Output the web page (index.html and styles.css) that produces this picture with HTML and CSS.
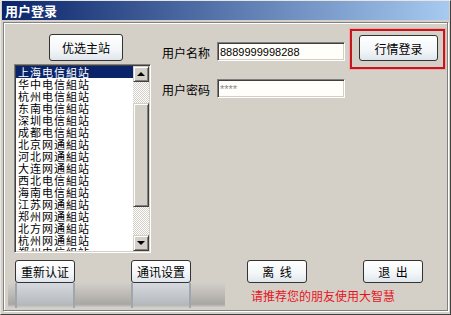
FILE: index.html
```html
<!DOCTYPE html>
<html lang="zh-CN">
<head>
    <meta charset="UTF-8">
    <title>用户登录</title>
    <link rel="stylesheet" href="styles.css">
</head>
<body>
    <div class="window">
        <div class="titlebar">用户登录</div>
        <div class="panel">
            <div class="top">
                <div class="stations">
                    <button class="btn btn-pref" type="button">优选主站</button>
                    <div class="listbox">
                        <div class="items">
                            <div class="item selected">上海电信組站</div>
                            <div class="item">华中电信組站</div>
                            <div class="item">杭州电信組站</div>
                            <div class="item">东南电信組站</div>
                            <div class="item">深圳电信組站</div>
                            <div class="item">成都电信組站</div>
                            <div class="item">北京网通組站</div>
                            <div class="item">河北网通組站</div>
                            <div class="item">大连网通組站</div>
                            <div class="item">西北电信組站</div>
                            <div class="item">海南电信組站</div>
                            <div class="item">江苏网通組站</div>
                            <div class="item">郑州网通組站</div>
                            <div class="item">北方网通組站</div>
                            <div class="item">杭州网通組站</div>
                            <div class="item">郑州电信組站</div>
                        </div>
                        <div class="scrollbar">
                            <div class="sb-btn"><span class="arrow-up"></span></div>
                            <div class="sb-track"><div class="sb-thumb"></div></div>
                            <div class="sb-btn"><span class="arrow-down"></span></div>
                        </div>
                    </div>
                </div>

                <div class="account">
                    <div class="field">
                        <label for="userName">用户名称</label>
                        <input type="text" id="userName" class="text-input" value="8889999998288">
                    </div>
                    <div class="field">
                        <label for="userPass">用户密码</label>
                        <input type="text" id="userPass" class="text-input pass" value="****">
                    </div>
                </div>

                <div class="login-frame">
                    <button class="btn btn-login" type="button">行情登录</button>
                </div>
            </div>

            <div class="actions">
                <button class="btn btn-small" type="button">重新认证</button>
                <button class="btn btn-small" type="button">通讯设置</button>
                <button class="btn btn-small" type="button">离&nbsp;&nbsp;线</button>
                <button class="btn btn-small" type="button">退&nbsp;&nbsp;出</button>
            </div>

            <div class="footer">
                <div class="strip">
                    <div class="ghost"></div>
                    <div class="ghost"></div>
                </div>
                <div class="tip">请推荐您的朋友使用大智慧</div>
            </div>
        </div>
    </div>
</body>
</html>
```

FILE: styles.css
```css
body {
    margin: 0;
    font-family: "Noto Sans CJK SC", "DejaVu Sans", sans-serif;
    font-size: 12px;
    background-color: #d4d0c8;
}

.window {
    width: 451px;
    height: 315px;
    box-sizing: border-box;
    background-color: #d4d0c8;
    border: 1px solid;
    border-color: #e8e6e2 #404040 #404040 #e8e6e2;
    padding: 0 1px 1px 1px;
}

.titlebar {
    height: 19px;
    line-height: 19px;
    padding-left: 3px;
    color: #fff;
    font-weight: bold;
    font-size: 13px;
    background: linear-gradient(to right, #0a246a, #a6caf0);
}

.panel {
    margin: 2px 1px 0 1px;
    height: 289px;
    box-sizing: border-box;
    border: 1px solid #808080;
    box-shadow: inset 1px 1px #fff, 1px 1px #fff;
    padding: 6px 0 0 0;
}

.top {
    display: flex;
    align-items: flex-start;
    padding-left: 10px;
}

/* buttons */
.btn {
    font-family: inherit;
    font-size: 12px;
    color: #000;
    padding: 0;
    border: 1px solid #333;
    border-radius: 3px;
    background: linear-gradient(#ffffff, #f3f6f8 60%, #dfe6ec);
    cursor: pointer;
}

.btn-pref {
    display: block;
    margin: 5px 0 0 35px;
    width: 74px;
    height: 27px;
}

/* station list */
.stations {
    width: 137px;
}

.listbox {
    margin-top: 3px;
    height: 189px;
    box-sizing: border-box;
    display: flex;
    background-color: #fff;
    border: 1px solid;
    border-color: #808080 #fff #fff #808080;
    box-shadow: inset 1px 1px #404040, inset -1px -1px #d4d0c8;
    padding: 1px;
    overflow: hidden;
}

.items {
    flex: 1;
    overflow: hidden;
}

.item {
    height: 12px;
    line-height: 12px;
    padding-left: 2px;
    font-size: 11px;
    letter-spacing: 1px;
    white-space: nowrap;
}

.item.selected {
    background-color: #0a246a;
    color: #fff;
}

.scrollbar {
    width: 16px;
    display: flex;
    flex-direction: column;
}

.sb-btn {
    height: 16px;
    box-sizing: border-box;
    background-color: #d4d0c8;
    border: 1px solid;
    border-color: #d4d0c8 #404040 #404040 #d4d0c8;
    box-shadow: inset 1px 1px #fff, inset -1px -1px #808080;
    display: flex;
    align-items: center;
    justify-content: center;
}

.arrow-up {
    width: 0;
    height: 0;
    border-left: 4px solid transparent;
    border-right: 4px solid transparent;
    border-bottom: 4px solid #000;
}

.arrow-down {
    width: 0;
    height: 0;
    border-left: 4px solid transparent;
    border-right: 4px solid transparent;
    border-top: 4px solid #000;
}

.sb-track {
    flex: 1;
    padding-top: 21px;
    background: repeating-conic-gradient(#d4d0c8 0 25%, #fff 0 50%) 0 0 / 2px 2px;
}

.sb-thumb {
    height: 104px;
    box-sizing: border-box;
    background-color: #d4d0c8;
    border: 1px solid;
    border-color: #d4d0c8 #404040 #404040 #d4d0c8;
    box-shadow: inset 1px 1px #fff, inset -1px -1px #808080;
}

/* account fields */
.account {
    margin: 13px 0 0 11px;
}

.field {
    display: flex;
    align-items: center;
    height: 19px;
}

.field + .field {
    margin-top: 18px;
}

.field label {
    width: 48px;
    margin-right: 7px;
    font-size: 12px;
    padding-top: 2px;
}

.text-input {
    width: 128px;
    height: 19px;
    box-sizing: border-box;
    margin: 0;
    padding: 0 2px;
    font-family: "Liberation Sans", Arial, sans-serif;
    font-size: 11px;
    color: #000;
    background-color: #fffef8;
    border: 1px solid;
    border-color: #808080 #fff #fff #808080;
    box-shadow: inset 1px 1px #404040, inset -1px -1px #d4d0c8;
    outline: none;
}

.text-input.pass {
    color: #8a8a8a;
}

/* login */
.login-frame {
    margin-left: 5px;
    width: 95px;
    height: 40px;
    box-sizing: border-box;
    border: 2px solid #c4161c;
    box-shadow: 0 0 0 1px #eba8a8;
    padding: 4px 0 0 7px;
}

.btn-login {
    width: 79px;
    height: 26px;
}

/* bottom buttons */
.actions {
    display: flex;
    gap: 56px;
    margin-top: 7px;
    padding-left: 11px;
}

.btn-small {
    width: 60px;
    height: 23px;
}

.footer {
    display: flex;
    align-items: center;
    margin-left: 4px;
}

.strip {
    width: 217px;
    height: 25px;
    display: flex;
    gap: 56px;
    padding-left: 7px;
    box-sizing: border-box;
    background: linear-gradient(#d2cfca, #c2bfba 35%, #a9a7a3 85%, #d8d6d2);
}

.ghost {
    width: 56px;
    height: 100%;
    border-left: 2px solid #9ea6ae;
    border-right: 2px solid #9ea6ae;
    background: linear-gradient(#d6dade, #b8bcc0 80%, transparent);
}

.tip {
    margin-left: 26px;
    color: #e8141c;
    font-size: 12px;
    line-height: 25px;
}
```
